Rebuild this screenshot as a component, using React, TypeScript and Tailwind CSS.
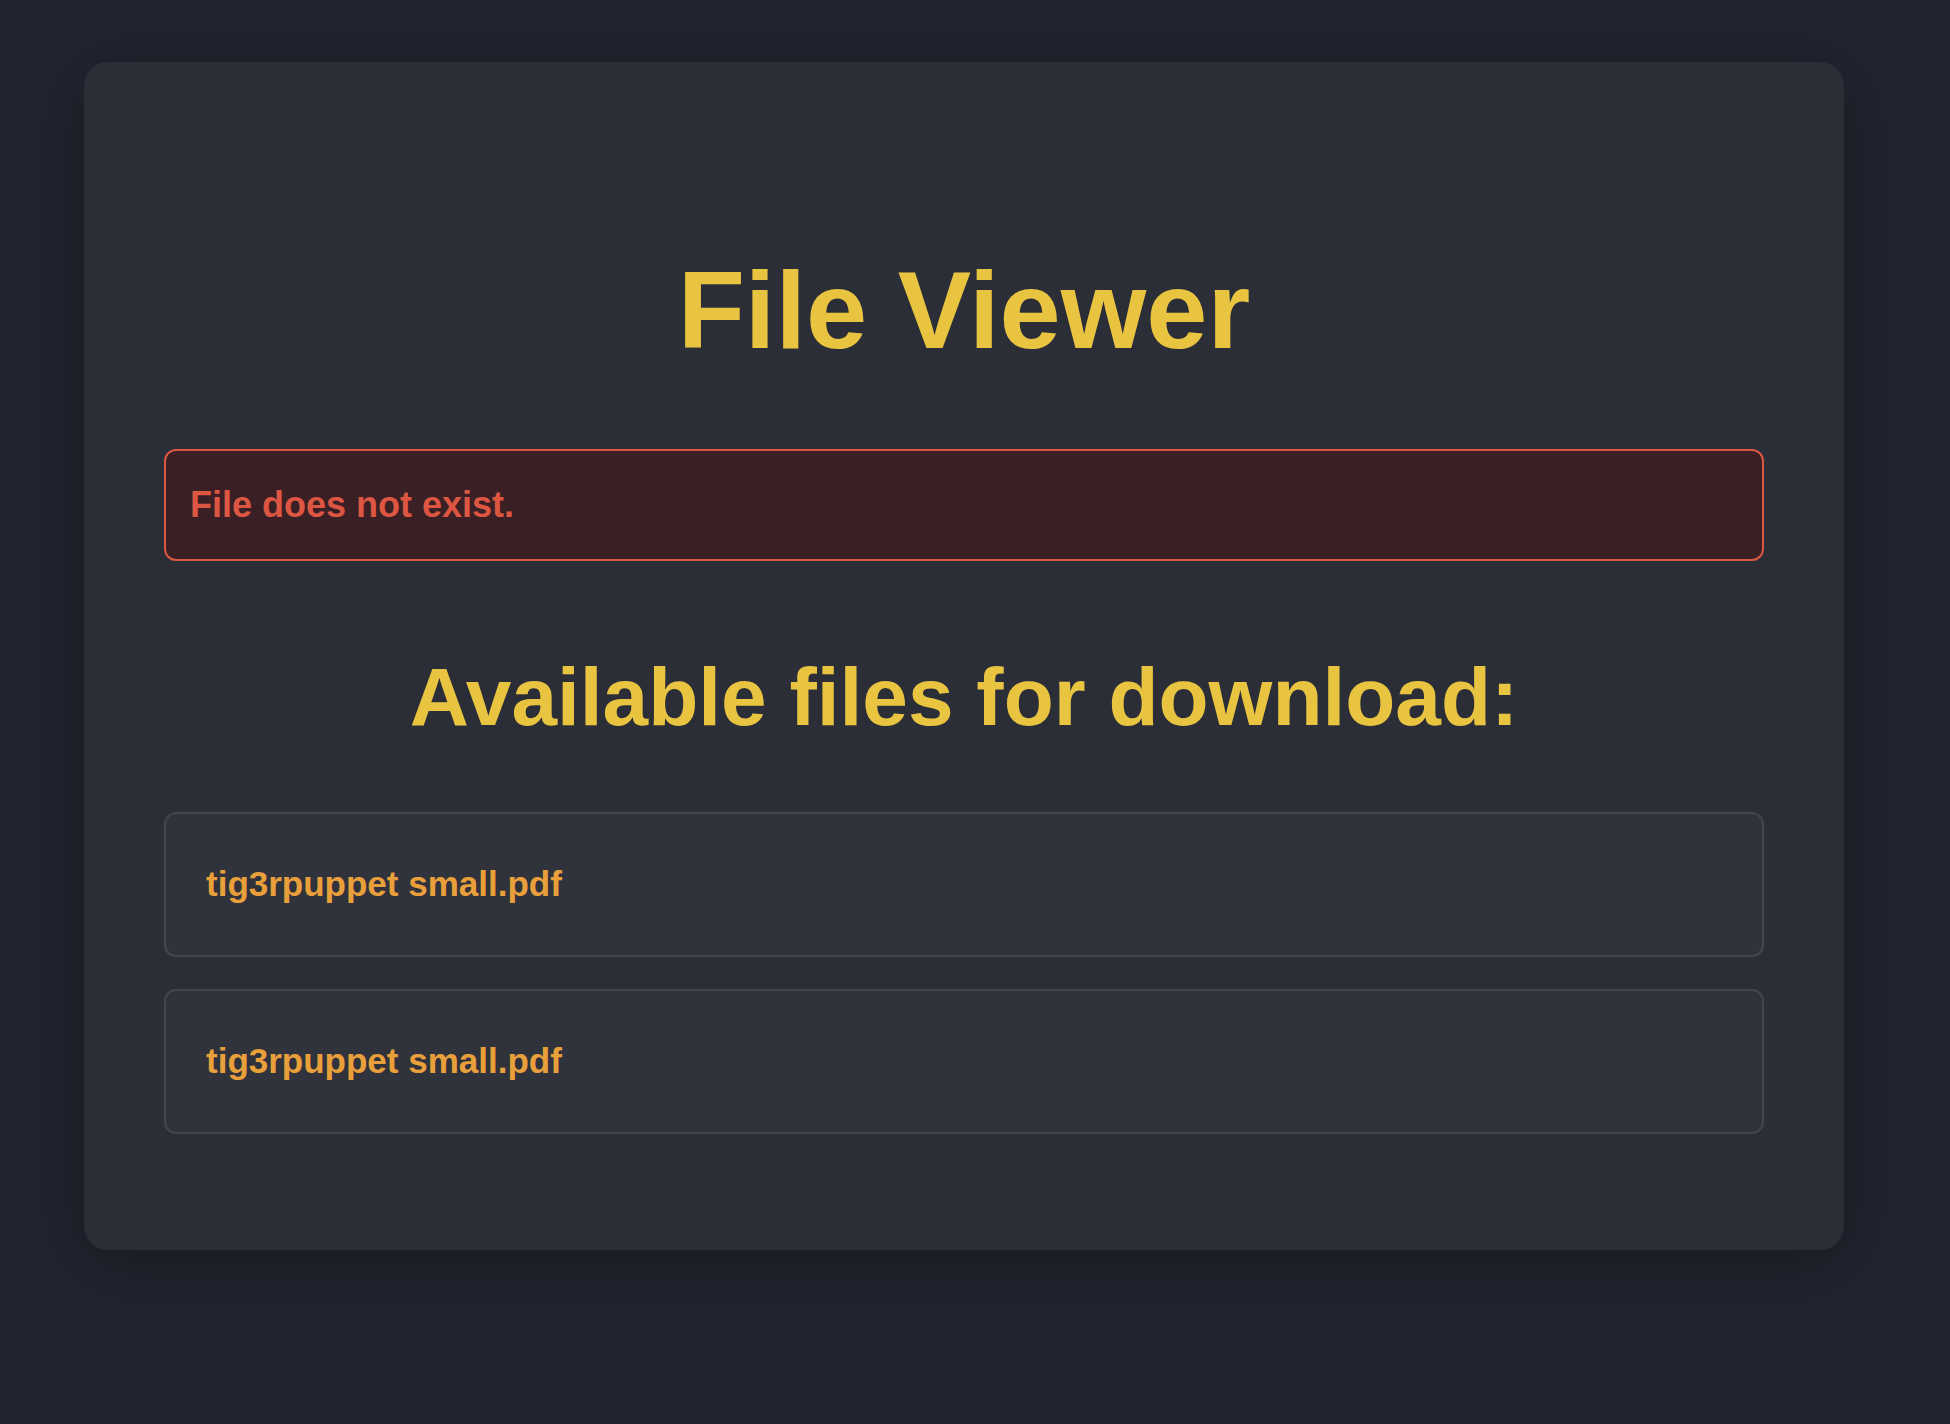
const files = ['tig3rpuppet small.pdf', 'tig3rpuppet small.pdf']

export default function App() {
  return (
    <div className="min-h-[1424px] w-full bg-[#222530] pt-[62px] pb-[174px] font-['Liberation_Sans',Arial,sans-serif]">
      {/* Main card */}
      <div className="ml-[84px] w-[1760px] rounded-[24px] bg-[#2b2e37] px-[80px] pt-[193px] pb-[116px] shadow-[0_12px_70px_rgba(0,0,0,0.35)]">
        <h1 className="text-center text-[110px] leading-[110px] font-bold text-[#e8c441]">File Viewer</h1>

        {/* Error message */}
        <div className="mt-[84px] flex h-[112px] items-center rounded-[12px] border-2 border-[#dc5742] bg-[#3a2024] px-[24px]">
          <span className="text-[36px] font-bold text-[#dc5642]">File does not exist.</span>
        </div>

        <h2 className="mt-[96px] text-center text-[82px] leading-[80px] font-bold text-[#e8c441]">
          Available files for download:
        </h2>

        {/* File list */}
        <div className="mt-[75px] flex flex-col gap-[32px]">
          {files.map((name, i) => (
            <div
              key={i}
              className="flex h-[145px] items-center rounded-[12px] border-2 border-[#44464d] bg-[#30333c] px-[40px]"
            >
              <span className="text-[35px] font-bold text-[#e9a03b]">{name}</span>
            </div>
          ))}
        </div>
      </div>
    </div>
  )
}
